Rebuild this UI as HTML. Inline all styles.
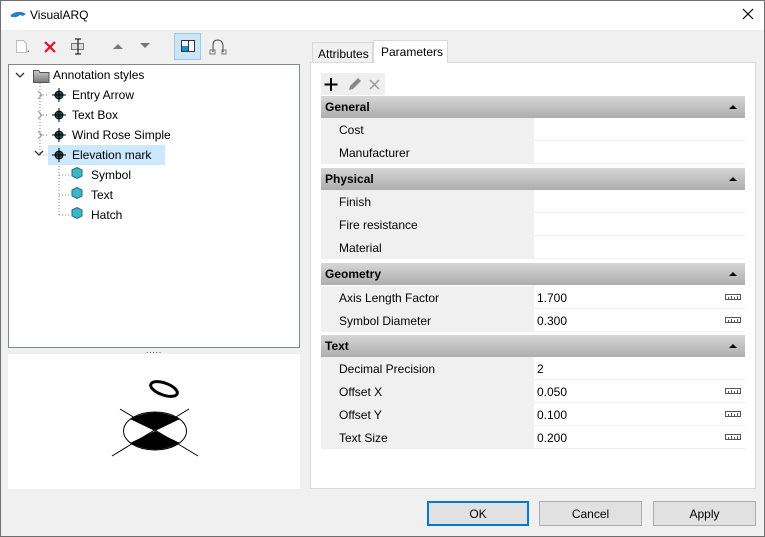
<!DOCTYPE html>
<html><head><meta charset="utf-8"><style>
*{box-sizing:border-box;margin:0;padding:0}
body{width:765px;height:537px;overflow:hidden;background:#f0f0f0;font-family:"Liberation Sans",sans-serif;font-size:12px;color:#000;position:relative}
.a{position:absolute}
.win{left:0;top:0;width:765px;height:537px;border:1px solid #6e6e6e}
.title{left:1px;top:1px;width:763px;height:29px;background:#fff}
.tree{left:8px;top:64px;width:292px;height:284px;background:#fff;border:1px solid #828790}
.prev{left:8px;top:354px;width:292px;height:135px;background:#fff}
.tn{position:absolute;font-size:12px;white-space:nowrap}
.panel{left:310px;top:62px;width:446px;height:427px;background:#fff;border:1px solid #d9d9d9}
.hdr{position:absolute;left:321px;width:424px;height:22px;background:linear-gradient(#d6d6d6,#adadad);font-weight:bold;padding:4px 0 0 4px}
.hdr:after{content:"";position:absolute;right:8px;top:9px;border-left:4px solid transparent;border-right:4px solid transparent;border-bottom:4px solid #000}
.row{position:absolute;left:321px;width:424px;height:23px;background:#f0f0f0}
.row .l{position:absolute;left:18px;top:5px}
.row .v{position:absolute;left:213px;top:0;width:211px;height:22px;background:#fff;padding:5px 0 0 3px}
.ruler{position:absolute;right:4px;top:8px}
.btn{position:absolute;top:501px;height:25px;background:#e1e1e1;border:1px solid #adadad;text-align:center;padding-top:5px;font-size:12px}
</style></head><body>
<div class="a win"></div>
<div class="a title"></div>
<svg class="a" style="left:9px;top:10px" width="18" height="10"><path d="M1 6 Q5 1 13 2 L17 4 L14 6 L11 5 Q6 9 1 6Z" fill="#2a7fc0"/></svg>
<div class="a" style="left:30px;top:8px;font-size:12px">VisualARQ</div>
<svg class="a" style="left:742px;top:8px" width="12" height="12"><path d="M1 1L11 11M11 1L1 11" stroke="#000" stroke-width="1.2"/></svg>

<!-- toolbar -->
<svg class="a" style="left:15px;top:39px" width="16" height="16"><path d="M1.5 1.5h7l3 3v9h-10z" fill="#fff" stroke="#bbb"/><path d="M12 13l2 0l0-2z" fill="#666"/></svg>
<svg class="a" style="left:44px;top:41px" width="12" height="12"><path d="M1 1L11 11M11 1L1 11" stroke="#e81123" stroke-width="2.2"/></svg>
<svg class="a" style="left:70px;top:38px" width="18" height="17"><rect x="1.5" y="5.5" width="12" height="6" fill="#ddd" stroke="#777"/><path d="M5 1h6M8 1v15M5 16h6" stroke="#000"/></svg>
<svg class="a" style="left:113px;top:43px" width="10" height="6"><path d="M0 6L5 1L10 6Z" fill="#777"/></svg>
<svg class="a" style="left:140px;top:43px" width="10" height="6"><path d="M0 0L5 5L10 0Z" fill="#777"/></svg>
<div class="a" style="left:174px;top:33px;width:27px;height:27px;background:#cce4f7;border:1px solid #99c9ef"></div>
<div class="a" style="left:181px;top:40px;width:14px;height:12px;border:1px solid #333;background:#fff"></div>
<div class="a" style="left:182px;top:46px;width:6px;height:5px;background:#1a8fd6"></div>
<div class="a" style="left:188px;top:41px;width:1px;height:10px;background:#333"></div>
<svg class="a" style="left:209px;top:38px" width="18" height="18"><path d="M4 14V7Q4 2 9 2Q13 2 14 7V14" fill="none" stroke="#444"/><rect x="1" y="12" width="5" height="4" fill="none" stroke="#777"/><rect x="13" y="12" width="4" height="4" fill="none" stroke="#777"/></svg>

<!-- tree -->
<div class="a tree"></div>
<svg class="a" style="left:9px;top:65px" width="290" height="160">
<g stroke="#888" stroke-dasharray="1,2" fill="none">
<path d="M31 18V90M31 30H40M31 50H40M31 70H40M31 90H40"/>
<path d="M50 98V150M50 110H60M50 130H60M50 150H60"/>
</g>
<path d="M7 8l4 4l4-4" stroke="#333" fill="none" stroke-width="1.3"/>
<path d="M29 26l4 4l-4 4M29 46l4 4l-4 4M29 66l4 4l-4 4" stroke="#aaa" fill="none" stroke-width="1.3"/>
</svg>
<div class="a" style="left:48px;width:117px;height:20px;background:#cce8ff;top:145px"></div>
<svg class="a" style="left:9px;top:65px" width="290" height="160">
<path d="M26 86l4 4l4-4" stroke="#333" fill="none" stroke-width="1.3"/>
<defs><linearGradient id="fg" x1="0" y1="0" x2="0" y2="1"><stop offset="0" stop-color="#ccc"/><stop offset="1" stop-color="#777"/></linearGradient></defs>
<path d="M24.5 5.5h5l1.5 2h9v10h-15.5z" fill="url(#fg)" stroke="#555"/>
<g fill="#1d4e5a" stroke="#000">
<circle cx="50" cy="30" r="4"/><circle cx="50" cy="50" r="4"/><circle cx="50" cy="70" r="4"/><circle cx="50" cy="90" r="4"/>
</g>
<g stroke="#000"><path d="M43 30h14M50 23v14M43 50h14M50 43v14M43 70h14M50 63v14M43 90h14M50 83v14"/></g>
<g fill="#3fb6c8" stroke="#1b7080"><path d="M63 105l5-2.5l5 2.5v6l-5 2.5l-5-2.5z"/><path d="M63 125l5-2.5l5 2.5v6l-5 2.5l-5-2.5z"/><path d="M63 145l5-2.5l5 2.5v6l-5 2.5l-5-2.5z"/></g>
</svg>
<div class="tn" style="left:53px;top:68px">Annotation styles</div>
<div class="tn" style="left:72px;top:88px">Entry Arrow</div>
<div class="tn" style="left:72px;top:108px">Text Box</div>
<div class="tn" style="left:72px;top:128px">Wind Rose Simple</div>
<div class="tn" style="left:72px;top:148px">Elevation mark</div>
<div class="tn" style="left:91px;top:168px">Symbol</div>
<div class="tn" style="left:91px;top:188px">Text</div>
<div class="tn" style="left:91px;top:208px">Hatch</div>
<div class="a" style="left:146px;top:349px;font-size:8px;letter-spacing:1px;line-height:4px">.....</div>

<div class="a prev"></div>
<svg class="a" style="left:8px;top:354px" width="292" height="135">
<ellipse cx="156" cy="35" rx="14" ry="6" transform="rotate(20 156 35)" fill="none" stroke="#000" stroke-width="3"/>
<path d="M122 65Q147 52 172 65L147 77Z M122 89Q147 102 172 89L147 77Z" fill="#000"/>
<ellipse cx="147" cy="77" rx="31.5" ry="19" fill="none" stroke="#000"/>
<path d="M112 55L190 102M181 55L104 102" stroke="#000"/>
</svg>

<!-- tabs -->
<div class="a" style="left:312px;top:42px;width:61px;height:21px;border:1px solid #d9d9d9;border-bottom:none;background:#f0f0f0;padding:4px 0 0 5px">Attributes</div>
<div class="a panel"></div>
<div class="a" style="left:373px;top:40px;width:75px;height:23px;border:1px solid #d9d9d9;border-bottom:none;background:#fff;padding:4px 0 0 7px">Parameters</div>

<div class="a" style="left:321px;top:73px;width:64px;height:22px;background:#eee"></div>
<svg class="a" style="left:323px;top:76px" width="60" height="16">
<path d="M8 2v13M1.5 8.5h13" stroke="#000" stroke-width="2"/>
<path d="M26 14l1-4l8-8l3 3l-8 8z" fill="#888"/>
<path d="M47 4l9 9M56 4l-9 9" stroke="#999" stroke-width="1.5"/>
</svg>

<div class="hdr" style="top:96px">General</div>
<div class="row" style="top:118px"><span class="l">Cost</span><div class="v"></div></div>
<div class="row" style="top:141px"><span class="l">Manufacturer</span><div class="v"></div></div>
<div class="hdr" style="top:168px">Physical</div>
<div class="row" style="top:190px"><span class="l">Finish</span><div class="v"></div></div>
<div class="row" style="top:213px"><span class="l">Fire resistance</span><div class="v"></div></div>
<div class="row" style="top:236px"><span class="l">Material</span><div class="v"></div></div>
<div class="hdr" style="top:263px">Geometry</div>
<div class="row" style="top:286px"><span class="l">Axis Length Factor</span><div class="v">1.700<svg class="ruler" width="16" height="6"><path d="M0.5 0.5v5h15v-5M3.5 3v2.5M6.5 2v3.5M9.5 3v2.5M12.5 2v3.5M0 0.5h16" fill="none" stroke="#555"/></svg></div></div>
<div class="row" style="top:309px"><span class="l">Symbol Diameter</span><div class="v">0.300<svg class="ruler" width="16" height="6"><path d="M0.5 0.5v5h15v-5M3.5 3v2.5M6.5 2v3.5M9.5 3v2.5M12.5 2v3.5M0 0.5h16" fill="none" stroke="#555"/></svg></div></div>
<div class="hdr" style="top:335px">Text</div>
<div class="row" style="top:357px"><span class="l">Decimal Precision</span><div class="v">2</div></div>
<div class="row" style="top:380px"><span class="l">Offset X</span><div class="v">0.050<svg class="ruler" width="16" height="6"><path d="M0.5 0.5v5h15v-5M3.5 3v2.5M6.5 2v3.5M9.5 3v2.5M12.5 2v3.5M0 0.5h16" fill="none" stroke="#555"/></svg></div></div>
<div class="row" style="top:403px"><span class="l">Offset Y</span><div class="v">0.100<svg class="ruler" width="16" height="6"><path d="M0.5 0.5v5h15v-5M3.5 3v2.5M6.5 2v3.5M9.5 3v2.5M12.5 2v3.5M0 0.5h16" fill="none" stroke="#555"/></svg></div></div>
<div class="row" style="top:426px"><span class="l">Text Size</span><div class="v">0.200<svg class="ruler" width="16" height="6"><path d="M0.5 0.5v5h15v-5M3.5 3v2.5M6.5 2v3.5M9.5 3v2.5M12.5 2v3.5M0 0.5h16" fill="none" stroke="#555"/></svg></div></div>

<div class="btn" style="left:427px;width:102px;border:2px solid #0078d7;padding-top:4px">OK</div>
<div class="btn" style="left:539px;width:103px">Cancel</div>
<div class="btn" style="left:653px;width:103px">Apply</div>
</body></html>
